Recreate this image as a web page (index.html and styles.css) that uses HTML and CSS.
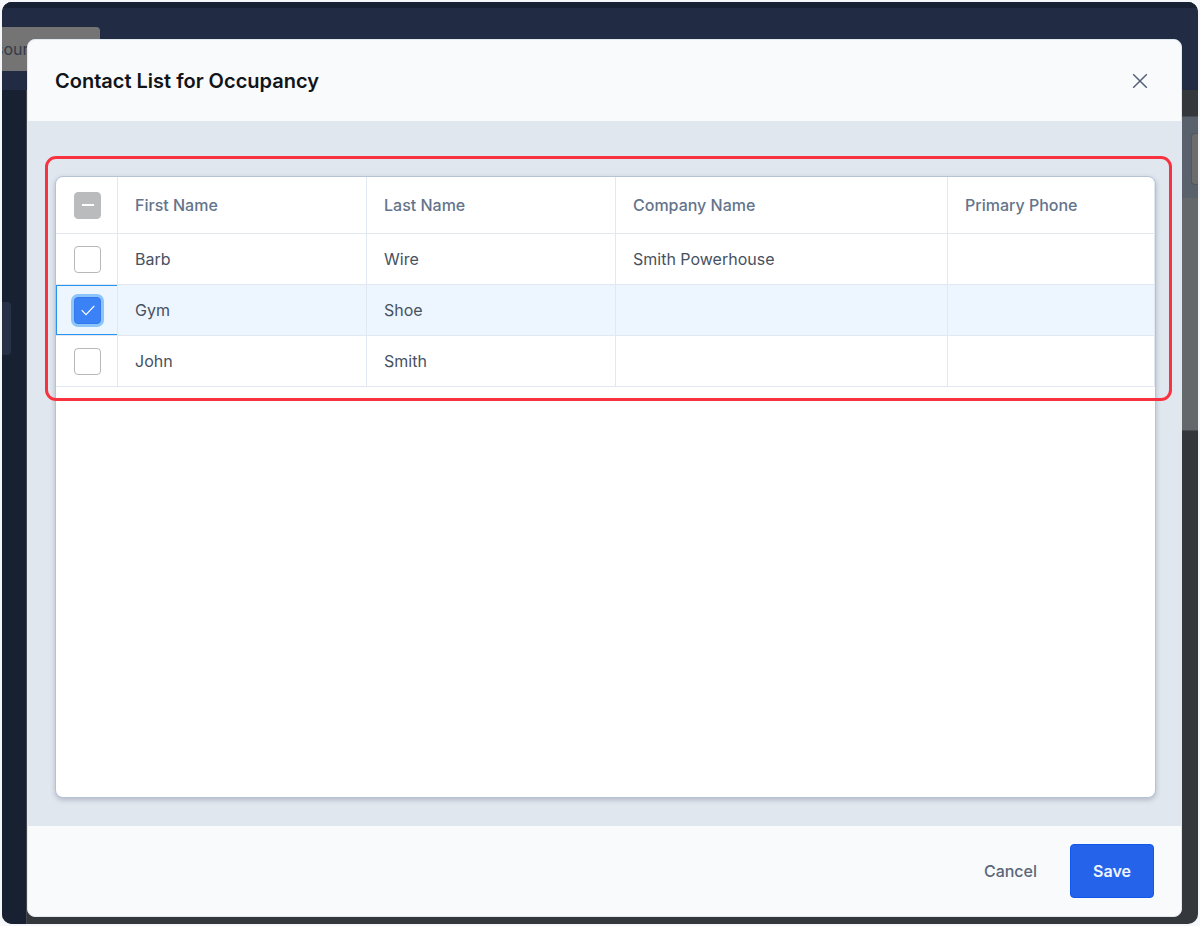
FILE: index.html
```html
<!DOCTYPE html>
<html lang="en">

<head>
  <meta charset="utf-8">
  <title>Contact List for Occupancy</title>
  <link rel="stylesheet" href="styles.css">
  <script>
    window.addEventListener('DOMContentLoaded', () => {
      document.getElementById('select-all').indeterminate = true;
    });
  </script>
</head>

<body>
  <div class="app">
    <!-- page behind the dialog -->
    <div class="topbar">
      <div class="tab">sour</div>
    </div>
    <div class="page">
      <div class="sidebar">
        <div class="sidebar-item"></div>
      </div>
      <div class="content">
        <div class="toolbar">
          <div class="toolbar-box"></div>
        </div>
        <div class="panel"></div>
      </div>
    </div>

    <div class="modal" role="dialog" aria-labelledby="modal-title">
      <div class="modal-header">
        <h1 id="modal-title">Contact List for Occupancy</h1>
        <button class="close-btn" type="button" aria-label="Close">
          <svg width="16" height="16" viewBox="0 0 16 16" fill="none" stroke="#536176" stroke-width="1.5">
            <path d="M1.2 1.2L14.8 14.8M14.8 1.2L1.2 14.8" />
          </svg>
        </button>
      </div>

      <div class="modal-body">
        <div class="grid">
          <div class="highlight">
            <table>
              <thead>
                <tr>
                  <th class="check-col"><input type="checkbox" id="select-all" aria-label="Select all"></th>
                  <th class="name-col">First Name</th>
                  <th class="name-col">Last Name</th>
                  <th class="company-col">Company Name</th>
                  <th>Primary Phone</th>
                </tr>
              </thead>
              <tbody>
                <tr>
                  <td class="check-col"><input type="checkbox" aria-label="Select Barb Wire"></td>
                  <td>Barb</td>
                  <td>Wire</td>
                  <td>Smith Powerhouse</td>
                  <td></td>
                </tr>
                <tr class="selected">
                  <td class="check-col"><input type="checkbox" aria-label="Select Gym Shoe" checked></td>
                  <td>Gym</td>
                  <td>Shoe</td>
                  <td></td>
                  <td></td>
                </tr>
                <tr>
                  <td class="check-col"><input type="checkbox" aria-label="Select John Smith"></td>
                  <td>John</td>
                  <td>Smith</td>
                  <td></td>
                  <td></td>
                </tr>
              </tbody>
            </table>
          </div>
        </div>
      </div>

      <div class="modal-footer">
        <button class="cancel-btn" type="button">Cancel</button>
        <button class="save-btn" type="button">Save</button>
      </div>
    </div>
  </div>
</body>

</html>
```
FILE: styles.css
```css
* {
box-sizing: border-box;
}

body {
margin: 0;
padding: 2px;
height: 100vh;
background-color: #f6f7fb;
font-family: Inter, "Liberation Sans", sans-serif;
font-size: 16px;
color: #475161;
}

.app {
position: relative;
display: flex;
flex-direction: column;
height: 100%;
border-radius: 10px;
overflow: hidden;
background-color: #34373c;
}

.topbar {
height: 88px;
padding-top: 19px;
border-top: 6px solid #172133;
background-color: #212c44;
}

.tab {
width: 98px;
height: 44px;
line-height: 44px;
border-radius: 0 4px 0 0;
background-color: #747474;
color: #333b48;
text-indent: -7px;
}

.page {
flex: 1;
display: flex;
}

.sidebar {
width: 25px;
padding-top: 212px;
border-right: 1px solid #45474d;
background-color: #172132;
}

.sidebar-item {
width: 9px;
height: 53px;
border-radius: 0 4px 4px 0;
background-color: #263148;
}

.content {
flex: 1;
padding-top: 26px;
}

.toolbar {
display: flex;
justify-content: flex-end;
height: 82px;
padding-top: 16px;
border-top: 1px solid #454d58;
background-color: #58616c;
}

.toolbar-box {
width: 7px;
height: 52px;
border: 1px solid #505760;
border-right: none;
border-radius: 4px 0 0 4px;
background-color: #6c6c6c;
}

.panel {
height: 233px;
border-bottom: 1px solid #4a4d51;
background-color: #65686b;
}

/* dialog */
.modal {
position: absolute;
top: 37px;
right: 16px;
bottom: 7px;
left: 25px;
display: flex;
flex-direction: column;
border: 1px solid #e2e8f0;
border-radius: 8px;
overflow: hidden;
background-color: #f9fafc;
}

.modal-header {
display: flex;
align-items: center;
justify-content: space-between;
height: 81px;
padding: 0 26px 0 27px;
}

.modal-header h1 {
margin: 0;
font-size: 20px;
font-weight: 600;
color: #111418;
}

.close-btn {
display: flex;
padding: 7px;
border: none;
background: none;
cursor: pointer;
}

.modal-body {
flex: 1;
display: flex;
padding: 55px 25px 28px 27px;
background-color: #e1e7ef;
}

.grid {
flex: 1;
border: 1px solid #b6c2d6;
border-radius: 8px;
background-color: #fff;
box-shadow: 0 2px 5px rgba(40, 50, 70, 0.25);
}

.highlight {
position: relative;
}

.highlight::after {
content: "";
position: absolute;
top: -21px;
right: -17px;
bottom: -14px;
left: -11px;
border: 3px solid #f8323f;
border-radius: 11px;
pointer-events: none;
}

table {
width: 100%;
table-layout: fixed;
border-collapse: separate;
border-spacing: 0;
}

th,
td {
height: 51px;
padding: 0 17px;
border-right: 1px solid #e1e8f1;
border-bottom: 1px solid #e1e8f1;
text-align: left;
}

th {
height: 57px;
font-weight: 500;
color: #64748b;
}

th:last-child {
border-top-right-radius: 7px;
}

.check-col {
width: 62px;
padding: 0 16px 0 18px;
}

.name-col {
width: 249px;
}

.company-col {
width: 332px;
}

.selected td {
background-color: #edf6fe;
}

.selected .check-col {
box-shadow: inset 1px 1px #2894f2, inset 0 -1px #2894f2;
}

input[type="checkbox"] {
appearance: none;
display: block;
width: 27px;
height: 27px;
margin: 0;
border: 1px solid #b6b8ba;
border-radius: 4px;
background: #fff center no-repeat;
cursor: pointer;
}

input[type="checkbox"]:indeterminate {
border-color: #b9bbbd;
background-color: #b9bbbd;
background-image: linear-gradient(#fff, #fff);
background-size: 12px 2px;
}

input[type="checkbox"]:checked {
border-color: #3478ee;
background-color: #3b82f6;
background-image: url("data:image/svg+xml,%3Csvg xmlns='http://www.w3.org/2000/svg' width='14' height='11' fill='none' stroke='white' stroke-width='1.2'%3E%3Cpath d='M0.7 5.2L5 9.7L13.3 0.8'/%3E%3C/svg%3E");
box-shadow: 0 0 0 3px #8bc5fa;
}

.modal-footer {
display: flex;
align-items: center;
justify-content: flex-end;
gap: 8px;
height: 90px;
padding: 0 27px;
}

.modal-footer button {
height: 54px;
border: 1px solid transparent;
border-radius: 4px;
font-family: inherit;
font-size: 16px;
cursor: pointer;
}

.cancel-btn {
padding: 0 24px;
background: none;
color: #5b6779;
font-weight: 500;
}

.modal-footer .save-btn {
width: 84px;
padding: 0;
border-color: #1057ec;
background-color: #2563eb;
color: #f1f5fe;
font-weight: 600;
}
```
